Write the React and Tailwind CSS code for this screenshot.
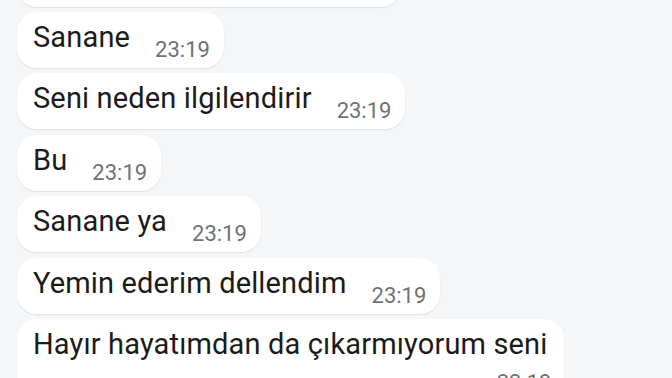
import React from "react";

const messages = [
  { text: "Sanane", time: "23:19" },
  { text: "Seni neden ilgilendirir", time: "23:19" },
  { text: "Bu", time: "23:19" },
  { text: "Sanane ya", time: "23:19" },
  { text: "Yemin ederim dellendim", time: "23:19" },
];

const Bubble = ({ text, time }) => (
  <div className="flex items-end rounded-[20px] bg-white pl-[16px] pr-[14px] pt-[7px] pb-[7px] shadow-[0_1px_1.5px_rgba(0,0,0,0.09)]">
    <span className="mb-[6px] text-[29px] leading-[36px] tracking-[0.15px] text-[#1b1b1b]">{text}</span>
    <span className="ml-[25px] text-[22px] leading-[22px] text-[#6e7277]">{time}</span>
  </div>
);

export default function App() {
  return (
    <div
      className="h-[378px] w-[672px] overflow-hidden bg-[#f5f6f8]"
      style={{ fontFamily: "Roboto, 'Noto Sans', sans-serif" }}
    >
      <div className="-mt-[49.4px] flex flex-col items-start gap-[5.4px] pl-[17px]">
        {/* previous message, cut off by the top edge */}
        <div className="h-[56px] w-[384px] rounded-[20px] bg-white shadow-[0_1px_1.5px_rgba(0,0,0,0.09)]" />

        {messages.map((m, i) => (
          <Bubble key={i} text={m.text} time={m.time} />
        ))}

        {/* long message, time drops to the next line */}
        <div className="flex flex-col rounded-[20px] bg-white pl-[16px] pr-[17px] pt-[7px] pb-[7px] shadow-[0_1px_1.5px_rgba(0,0,0,0.09)]">
          <span className="text-[29px] leading-[36px] tracking-[0.15px] text-[#1b1b1b]">
            Hayır hayatımdan da çıkarmıyorum seni
          </span>
          <span className="-mr-[4px] mt-[10px] self-end text-[22px] leading-[22px] text-[#6e7277]">23:19</span>
        </div>
      </div>
    </div>
  );
}
